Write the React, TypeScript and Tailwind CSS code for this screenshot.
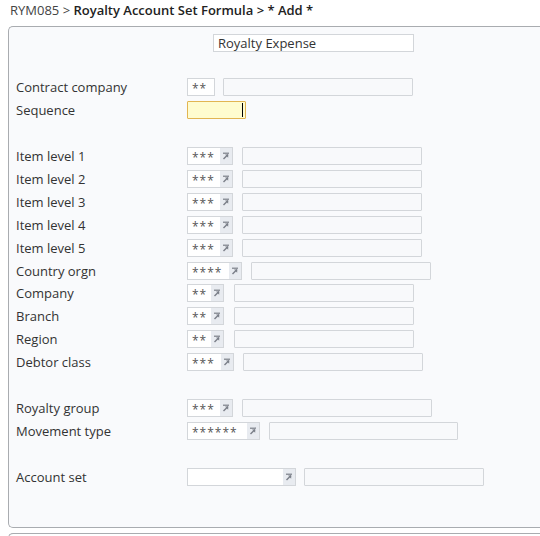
import React from "react";

type Row = {
  label?: string;
  code?: string;
  small?: number;
  big?: number;
  arrow?: boolean;
  gap?: number;
  kind?: "seq";
};

const rows: Row[] = [
  { label: "Contract company", code: "**", small: 28, big: 190, arrow: false, gap: 8 },
  { label: "Sequence", kind: "seq" },
  {},
  { label: "Item level 1", code: "***", small: 46, big: 180, gap: 9 },
  { label: "Item level 2", code: "***", small: 46, big: 180, gap: 9 },
  { label: "Item level 3", code: "***", small: 46, big: 180, gap: 9 },
  { label: "Item level 4", code: "***", small: 46, big: 180, gap: 9 },
  { label: "Item level 5", code: "***", small: 46, big: 180, gap: 9 },
  { label: "Country orgn", code: "****", small: 55, big: 180, gap: 9 },
  { label: "Company", code: "**", small: 37, big: 180, gap: 10 },
  { label: "Branch", code: "**", small: 37, big: 180, gap: 10 },
  { label: "Region", code: "**", small: 37, big: 180, gap: 10 },
  { label: "Debtor class", code: "***", small: 47, big: 180, gap: 9 },
  {},
  { label: "Royalty group", code: "***", small: 46, big: 190, gap: 9 },
  { label: "Movement type", code: "******", small: 73, big: 189, gap: 9 },
  {},
  { label: "Account set", code: "", small: 109, big: 180, gap: 8 },
];

const ZoomArrow = () => (
  <svg width="8" height="8" viewBox="0 0 8 8" className="block">
    <path d="M1 1.2 H7" stroke="#7a7f88" strokeWidth="1.2" />
    <path d="M1.5 7 L6 2.5" stroke="#7a7f88" strokeWidth="1.4" />
    <path d="M3 2.5 H6.2 V5.7 Z" fill="#7a7f88" />
  </svg>
);

const App = () => {
  return (
    <div
      className="w-[540px] h-[536px] overflow-hidden bg-white text-[#333] text-[13px]"
      style={{ fontFamily: '"Open Sans", "Noto Sans", sans-serif' }}
    >
      <div className="h-[26px] pl-[10px] pt-[1px] leading-[18px] whitespace-nowrap">
        <span className="text-[#444]">RYM085 &gt; </span>
        <span className="font-semibold text-[#222]">Royalty Account Set Formula &gt; * Add *</span>
      </div>
      <div className="ml-2 w-[560px] h-[502px] border-l border-t border-b border-[#a9acb0] rounded-l-[5px] bg-[#f9fafc] pl-[7px] pt-[7px]">
        <div className="flex pl-[197px]">
          <div className="w-[201px] h-[18px] border border-[#d3d6da] bg-white pl-[4px] leading-[16px] text-[#333]">
            Royalty Expense
          </div>
        </div>
        <div className="h-[24px]" />
        {rows.map((r, i) => (
          <div key={i} className="flex items-center h-[22.9px]">
            <div className="w-[171px] leading-[18px] whitespace-nowrap">{r.label}</div>
            {r.kind === "seq" ? (
              <div className="relative w-[59px] h-[18px] border border-[#e2b552] bg-[#fffccf] rounded-[1px]">
                <div className="absolute right-[2px] top-[1px] w-px h-[14px] bg-black" />
              </div>
            ) : r.label ? (
              <div className="flex items-center" style={{ gap: `${r.gap ?? 10}px` }}>
                <div
                  className="flex h-[18px] border border-[#d3d6da] bg-white"
                  style={{ width: r.small }}
                >
                  <div className="flex-1 pl-[4px] pt-[4px] leading-[12px] text-[12px] tracking-[1px] text-[#555] whitespace-nowrap">
                    {r.code}
                  </div>
                  {r.arrow !== false && (
                    <div className="w-[12px] h-full bg-[#e8ebf0] flex items-start justify-center pt-[4px]">
                      <ZoomArrow />
                    </div>
                  )}
                </div>
                <div
                  className="h-[18px] border border-[#d3d6da] bg-[#f8f9fb] rounded-[1px]"
                  style={{ width: r.big }}
                />
              </div>
            ) : null}
          </div>
        ))}
      </div>
      <div className="ml-2 mt-[5px] w-[560px] h-[20px] border-l border-t border-[#a9acb0] rounded-tl-[5px]" />
    </div>
  );
};

export default App;
